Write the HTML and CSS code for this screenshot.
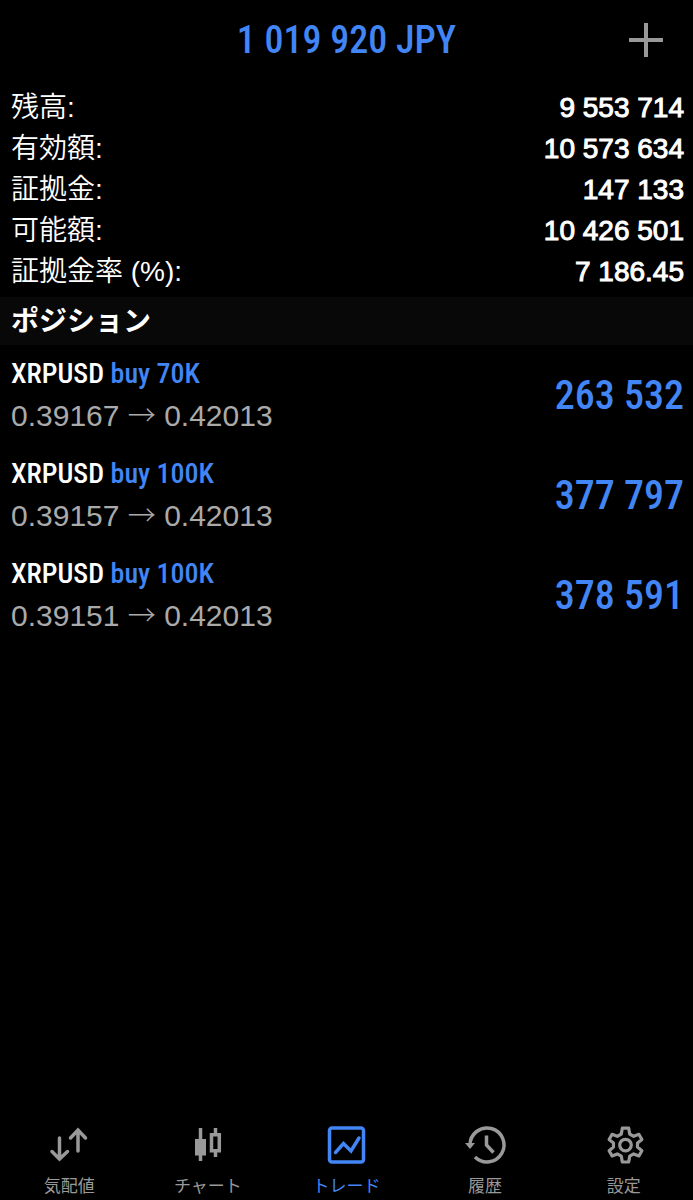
FILE: index.html
```html
<!DOCTYPE html>
<html lang="ja">
<head>
  <meta charset="UTF-8">
  <meta name="viewport" content="width=device-width, initial-scale=1.0">
  <title>トレード</title>
  <link rel="stylesheet" href="styles.css">
</head>
<body>
  <header class="topbar">
    <h1>1 019 920 JPY</h1>
    <button class="add" type="button" aria-label="新規注文">
      <svg width="34" height="34" viewBox="0 0 34 34"><path d="M17 0v34M0 17h34"/></svg>
    </button>
  </header>

  <main>
    <dl class="summary">
      <div class="line"><dt>残高:</dt><dd>9 553 714</dd></div>
      <div class="line"><dt>有効額:</dt><dd>10 573 634</dd></div>
      <div class="line"><dt>証拠金:</dt><dd>147 133</dd></div>
      <div class="line"><dt>可能額:</dt><dd>10 426 501</dd></div>
      <div class="line"><dt>証拠金率 (%):</dt><dd>7 186.45</dd></div>
    </dl>

    <h2>ポジション</h2>
    <ul class="positions">
      <li class="position">
        <div>
          <p class="symbol">XRPUSD <span class="buy">buy 70K</span></p>
          <p class="price">0.39167 <span class="arrow">→</span> 0.42013</p>
        </div>
        <span class="profit">263 532</span>
      </li>
      <li class="position">
        <div>
          <p class="symbol">XRPUSD <span class="buy">buy 100K</span></p>
          <p class="price">0.39157 <span class="arrow">→</span> 0.42013</p>
        </div>
        <span class="profit">377 797</span>
      </li>
      <li class="position">
        <div>
          <p class="symbol">XRPUSD <span class="buy">buy 100K</span></p>
          <p class="price">0.39151 <span class="arrow">→</span> 0.42013</p>
        </div>
        <span class="profit">378 591</span>
      </li>
    </ul>
  </main>

  <nav class="tabs">
    <a class="tab" href="#quotes">
      <svg width="40" height="40" viewBox="0 0 40 40" stroke-width="3.500" stroke-linecap="round">
        <path d="M10.500 13v21M3 26.500l7.500 7.500 8-7.500M29 26V5M21.500 13L29 5l7.500 8"/>
      </svg>
      気配値
    </a>
    <a class="tab" href="#chart">
      <svg width="40" height="40" viewBox="0 0 40 40" stroke-width="3.500">
        <path d="M12.500 3v33M27.500 3v6M27.500 26v6"/>
        <path class="solid" d="M7 14h11v16.500H7z"/>
        <path d="M23.500 9.800h7.800v16h-7.800z"/>
      </svg>
      チャート
    </a>
    <a class="tab active" href="#trade" aria-current="page">
      <svg width="40" height="40" viewBox="0 0 40 40">
        <rect x="3.500" y="3" width="34" height="34" rx="2.500" stroke-width="3.500"/>
        <path d="M9.500 27.500L17.500 18.500l7.500 7.500 8-13" stroke-width="3.500"  stroke-linecap="round"/>
      </svg>
      トレード
    </a>
    <a class="tab" href="#history">
      <svg width="40" height="40" viewBox="0 0 40 40" stroke-width="3.500">
        <path d="M5 20A17 17 0 1 1 10 32M21.500 10.500v9.500l7 7.500"/>
        <path class="solid" d="M0 18h10l-5 6z"/>
      </svg>
      履歴
    </a>
    <a class="tab" href="#settings">
      <svg width="40" height="40" viewBox="0 0 40 40" stroke-width="3.200" stroke-linejoin="round">
        <path d="M18.300 3.200h6.400l1 5.800 4 2.300 5.200-2 3 5.200-4.400 3.600v4l4.400 3.600-3 5.200-5.200-2-4 2.300-1 5.800h-6.400l-1-5.800-4-2.300-5.200 2-3-5.200 4.400-3.600v-4l-4.400-3.600 3-5.200 5.200 2 4-2.300z"/>
        <circle cx="21.500" cy="20.100" r="5.800"/>
      </svg>
      設定
    </a>
  </nav>
</body>
</html>
```
FILE: styles.css
```css
* {
  box-sizing: border-box;
  margin: 0;
  padding: 0;
}
body {
  display: flex;
  flex-direction: column;
  min-height: 100vh;
  background: #000;
  color: #fff;
  font-family: "Liberation Sans", "Noto Sans CJK JP", sans-serif;
}
main {
  flex: 1;
}
svg {
  fill: none;
  stroke: currentColor;
  overflow: visible;
}
.solid {
  fill: currentColor;
  stroke: none;
}

.topbar {
  display: grid;
  grid-template-columns: 1fr auto 1fr;
  align-items: center;
  height: 80px;
  padding: 0 30px;
}
h1 {
  grid-column: 2;
  color: #4285f4;
}
h1, .symbol, .profit {
  font-family: "Avenir Next Condensed", "Roboto Condensed", "Noto Sans CJK JP", sans-serif;
  font-weight: 500;
}
h1 {
  font-size: 38px;
}
.profit {
  font-size: 40px;
}
.add {
  justify-self: end;
  height: 34px;
  background: none;
  border: none;
  color: #999;
  cursor: pointer;
}
.add svg {
  display: block;
  stroke-width: 4px;
}

.summary {
  padding: 7px 9px 5px 11px;
}
.line {
  display: flex;
  justify-content: space-between;
  height: 41px;
  font-size: 28px;
  line-height: 41px;
}
dt {
  font-weight: 350;
}
dd {
  -webkit-text-stroke: 1px #fff;
}
h2 {
  height: 48px;
  padding: 0 11px;
  background: #080808;
  font-size: 28px;
  line-height: 50px;
}

.positions {
  list-style: none;
}
.position {
  display: flex;
  justify-content: space-between;
  align-items: center;
  height: 100px;
  padding: 0 9px 0 11px;
}
.symbol {
  font-size: 28px;
  line-height: 42px;
}
.price {
  color: #aaa;
  font-size: 30px;
  line-height: 42px;
}
.arrow {
  font-family: "Noto Sans CJK JP", sans-serif;
  font-size: 28px;
  font-weight: 300;
  line-height: 1;
}
.buy, .profit {
  color: #4285f4;
}

.tabs {
  display: flex;
}
.tab {
  flex: 1;
  display: flex;
  flex-direction: column;
  align-items: center;
  gap: 9px;
  color: #999;
  font-size: 17px;
  line-height: 26px;
  text-decoration: none;
}
.active {
  color: #4285f4;
}
```
